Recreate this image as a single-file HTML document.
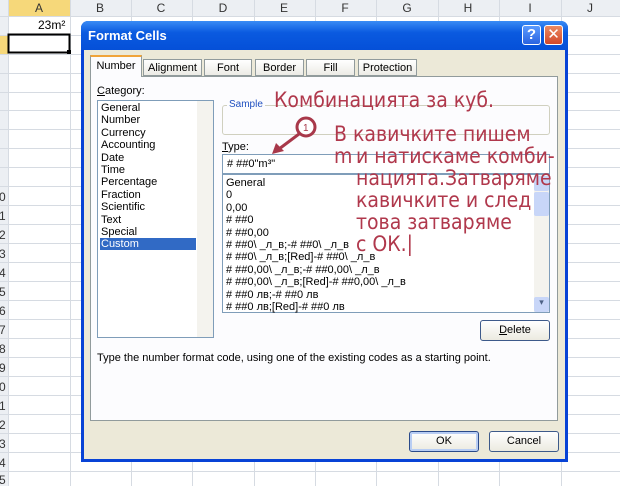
<!DOCTYPE html>
<html><head><meta charset="utf-8"><style>
*{margin:0;padding:0;box-sizing:border-box}
body{width:620px;height:486px;overflow:hidden;background:#fff;font-family:"Liberation Sans","DejaVu Sans",sans-serif;position:relative}
.abs{position:absolute}
.t{font-size:11px;color:#000;white-space:nowrap}
.red{color:#b0384c;font-family:"DejaVu Sans Condensed","Liberation Sans Narrow","Liberation Sans",sans-serif;font-size:21px;line-height:22px;white-space:nowrap;position:absolute}
.btn{position:absolute;border:1px solid #3d5a8a;border-radius:3px;background:linear-gradient(#fff,#eceae0);font-size:11px;text-align:center;line-height:19px}
.tab{position:absolute;font-size:11px;white-space:nowrap;top:59px;height:17px;background:linear-gradient(#fff,#ecebe5);border:1px solid #919b9c;text-align:center;line-height:16px}
</style></head><body>
<svg class="abs" style="left:0;top:0" width="620" height="486">
<rect x="0" y="0" width="620" height="16" fill="#eceff3"/>
<rect x="8" y="0" width="62" height="16" fill="#f6d87a"/>
<rect x="0" y="16" width="8" height="470" fill="#eceff3"/>
<rect x="0" y="35" width="8" height="19" fill="#f6d87a"/>
<g stroke="#d6dbe2" stroke-width="1">
<line x1="8.5" y1="0" x2="8.5" y2="486"/>
<line x1="70.5" y1="0" x2="70.5" y2="486"/><line x1="131.5" y1="0" x2="131.5" y2="486"/><line x1="192.5" y1="0" x2="192.5" y2="486"/><line x1="254.5" y1="0" x2="254.5" y2="486"/><line x1="315.5" y1="0" x2="315.5" y2="486"/><line x1="376.5" y1="0" x2="376.5" y2="486"/><line x1="438.5" y1="0" x2="438.5" y2="486"/><line x1="499.5" y1="0" x2="499.5" y2="486"/><line x1="561.5" y1="0" x2="561.5" y2="486"/>
<line x1="0" y1="16.5" x2="620" y2="16.5"/><line x1="0" y1="35.5" x2="620" y2="35.5"/><line x1="0" y1="54.5" x2="620" y2="54.5"/><line x1="0" y1="73.5" x2="620" y2="73.5"/><line x1="0" y1="92.5" x2="620" y2="92.5"/><line x1="0" y1="110.5" x2="620" y2="110.5"/><line x1="0" y1="129.5" x2="620" y2="129.5"/><line x1="0" y1="148.5" x2="620" y2="148.5"/><line x1="0" y1="167.5" x2="620" y2="167.5"/><line x1="0" y1="186.5" x2="620" y2="186.5"/><line x1="0" y1="205.5" x2="620" y2="205.5"/><line x1="0" y1="224.5" x2="620" y2="224.5"/><line x1="0" y1="243.5" x2="620" y2="243.5"/><line x1="0" y1="262.5" x2="620" y2="262.5"/><line x1="0" y1="281.5" x2="620" y2="281.5"/><line x1="0" y1="300.5" x2="620" y2="300.5"/><line x1="0" y1="319.5" x2="620" y2="319.5"/><line x1="0" y1="338.5" x2="620" y2="338.5"/><line x1="0" y1="357.5" x2="620" y2="357.5"/><line x1="0" y1="376.5" x2="620" y2="376.5"/><line x1="0" y1="395.5" x2="620" y2="395.5"/><line x1="0" y1="414.5" x2="620" y2="414.5"/><line x1="0" y1="433.5" x2="620" y2="433.5"/><line x1="0" y1="452.5" x2="620" y2="452.5"/><line x1="0" y1="471.5" x2="620" y2="471.5"/>
</g>
<g font-size="12" fill="#333" font-family="Liberation Sans" text-anchor="middle">
<text x="39" y="12">A</text><text x="100" y="12">B</text><text x="161" y="12">C</text><text x="223" y="12">D</text><text x="284" y="12">E</text><text x="345" y="12">F</text><text x="407" y="12">G</text><text x="468" y="12">H</text><text x="530" y="12">I</text><text x="590" y="12">J</text>
</g>
<g font-size="12" fill="#333" font-family="Liberation Sans">
<text x="-1" y="201">0</text><text x="-1" y="220">1</text><text x="-1" y="239">2</text><text x="-1" y="258">3</text><text x="-1" y="277">4</text><text x="-1" y="296">5</text><text x="-1" y="315">6</text><text x="-1" y="334">7</text><text x="-1" y="353">8</text><text x="-1" y="372">9</text><text x="-1" y="391">0</text><text x="-1" y="410">1</text><text x="-1" y="429">2</text><text x="-1" y="448">3</text><text x="-1" y="467">4</text><text x="-1" y="484">5</text>
</g>
<text x="38" y="29" font-size="12" font-family="Liberation Sans">23m²</text>
<rect x="8.5" y="34.5" width="61" height="18" fill="none" stroke="#000" stroke-width="2"/>
<rect x="67" y="50" width="4" height="4" fill="#000"/>
</svg>
<div class="abs" style="left:81px;top:21px;width:487px;height:441px;background:#0843d6;border-radius:7px 7px 0 0"></div>
<div class="abs" style="left:81px;top:21px;width:487px;height:29px;background:linear-gradient(#3a8cf5,#0a5ae0 40%,#0550d8);border-radius:7px 7px 0 0"></div>
<div class="abs" style="left:88px;top:28px;color:#fff;font-weight:bold;font-size:13px">Format Cells</div>
<div class="abs" style="left:522px;top:25px;width:19px;height:20px;background:linear-gradient(#5a9bff,#2a63e0);border:1px solid #fff;border-radius:3px;color:#fff;font-weight:bold;font-size:15px;text-align:center;line-height:18px">?</div>
<div class="abs" style="left:544px;top:25px;width:19px;height:20px;background:linear-gradient(#ec8a60,#d2482a);border:1px solid #fff;border-radius:3px;color:#fff;font-weight:bold;font-size:15px;text-align:center;line-height:18px">✕</div>
<div class="abs" style="left:84px;top:50px;width:481px;height:409px;background:#ece9d8"></div>
<div class="abs" style="left:90px;top:55px;width:52px;height:23px;background:#fcfcfe;border:1px solid #919b9c;border-bottom:none;border-top:2px solid #f0a43a;text-align:center;line-height:19px;font-size:11px">Number</div>
<div class="tab" style="left:143px;width:59px">Alignment</div>
<div class="tab" style="left:204px;width:48px">Font</div>
<div class="tab" style="left:255px;width:49px">Border</div>
<div class="tab" style="left:306px;width:49px">Fill</div>
<div class="tab" style="left:358px;width:59px">Protection</div>
<div class="abs" style="left:90px;top:76px;width:468px;height:345px;background:#fcfcfe;border:1px solid #919b9c"></div>
<div class="abs" style="left:91px;top:76px;width:50px;height:2px;background:#fcfcfe"></div>
<div class="abs t" style="left:97px;top:85px"><u>C</u>ategory:</div>
<div class="abs" style="left:97px;top:100px;width:117px;height:238px;background:#fff;border:1px solid #7f9db9"></div>
<div class="abs" style="left:197px;top:101px;width:16px;height:236px;background:#f4f3ee"></div>
<div class="abs t" style="left:101px;top:102px;line-height:12.4px">General<br>Number<br>Currency<br>Accounting<br>Date<br>Time<br>Percentage<br>Fraction<br>Scientific<br>Text<br>Special</div>
<div class="abs t" style="left:100px;top:238px;width:96px;height:12px;background:#316ac5;color:#fff;padding-left:1px;line-height:12px">Custom</div>
<div class="abs" style="left:222px;top:105px;width:328px;height:30px;border:1px solid #d0d0bf;border-radius:3px"></div>
<div class="abs" style="left:227px;top:99px;background:#fcfcfe;color:#2050c0;font-size:10px;padding:0 2px">Sample</div>
<div class="abs t" style="left:222px;top:141px"><u>T</u>ype:</div>
<div class="abs t" style="left:222px;top:154px;width:328px;height:20px;background:#fff;border:1px solid #7f9db9;padding:3px 4px">#&nbsp;##0"m³"</div>
<div class="abs" style="left:222px;top:174px;width:328px;height:139px;background:#fff;border:1px solid #7f9db9"></div>
<div class="abs" style="left:534px;top:175px;width:15px;height:137px;background:#f4f3ee"></div>
<div class="abs" style="left:534px;top:176px;width:15px;height:15px;background:#c8d6f8;border-radius:2px"></div>
<div class="abs" style="left:534px;top:192px;width:15px;height:24px;background:#c8d6f8;border-radius:2px"></div>
<div class="abs" style="left:534px;top:297px;width:15px;height:15px;background:#c8d6f8;border-radius:2px;font-size:9px;text-align:center;color:#4d6185">▾</div>
<div class="abs t" style="left:226px;top:177px;line-height:12.4px">General<br>0<br>0,00<br>#&nbsp;##0<br>#&nbsp;##0,00<br>#&nbsp;##0\&nbsp;_л_в;-#&nbsp;##0\&nbsp;_л_в<br>#&nbsp;##0\&nbsp;_л_в;[Red]-#&nbsp;##0\&nbsp;_л_в<br>#&nbsp;##0,00\&nbsp;_л_в;-#&nbsp;##0,00\&nbsp;_л_в<br>#&nbsp;##0,00\&nbsp;_л_в;[Red]-#&nbsp;##0,00\&nbsp;_л_в<br>#&nbsp;##0&nbsp;лв;-#&nbsp;##0&nbsp;лв<br>#&nbsp;##0&nbsp;лв;[Red]-#&nbsp;##0&nbsp;лв</div>
<div class="btn" style="left:480px;top:320px;width:70px;height:21px"><u>D</u>elete</div>
<div class="abs t" style="left:97px;top:352px">Type the number format code, using one of the existing codes as a starting point.</div>
<div class="btn" style="left:409px;top:431px;width:70px;height:21px;border-color:#2a4a8a;box-shadow:inset 0 0 0 2px #b8cdf3">OK</div>
<div class="btn" style="left:489px;top:431px;width:70px;height:21px">Cancel</div>
<svg class="abs" style="left:0;top:0" width="620" height="486">
<circle cx="306" cy="127" r="9" fill="#fff" stroke="#a8384a" stroke-width="3"/>
<text x="303" y="131" font-size="10" fill="#a8384a" font-family="Liberation Sans">1</text>
<line x1="299" y1="134" x2="279" y2="149" stroke="#a8384a" stroke-width="3"/>
<polygon points="272,154 276,143 284,151" fill="#a8384a"/>
</svg>
<div class="red" style="left:274px;top:89px">Комбинацията за куб.</div>
<div class="red" style="left:334px;top:123px">В кавичките пишем</div>
<div class="red" style="left:334px;top:145px">m</div>
<div class="red" style="left:356px;top:145px">и натискаме комби-</div>
<div class="red" style="left:356px;top:167px">нацията.Затваряме</div>
<div class="red" style="left:356px;top:189px">кавичките и след</div>
<div class="red" style="left:356px;top:211px">това затваряме</div>
<div class="red" style="left:356px;top:233px">с ОК.|</div>
</body></html>
